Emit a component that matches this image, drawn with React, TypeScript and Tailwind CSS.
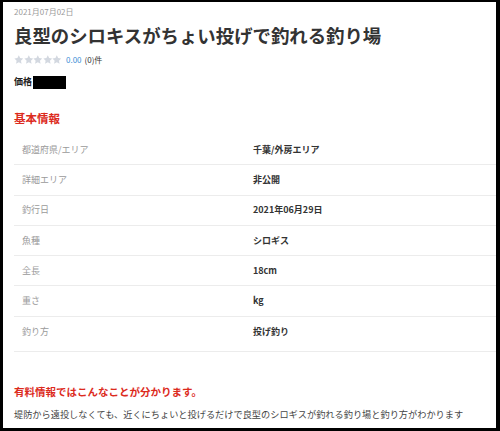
const rows = [
  { label: "都道府県/エリア", value: "千葉/外房エリア" },
  { label: "詳細エリア", value: "非公開" },
  { label: "釣行日", value: "2021年06月29日" },
  { label: "魚種", value: "シロギス" },
  { label: "全長", value: "18cm" },
  { label: "重さ", value: "kg" },
  { label: "釣り方", value: "投げ釣り" },
];

function Star() {
  return (
    <svg viewBox="0 0 24 24" className="w-[9.6px] h-[9.6px]" fill="#d3d8e0">
      <path d="M12 0.8l3.4 7 7.6 1-5.6 5.3 1.5 7.6L12 18l-6.9 3.7 1.5-7.6L1 8.8l7.6-1z" />
    </svg>
  );
}

export default function App() {
  return (
    <div
      className="w-[500px] h-[431px] bg-white border-black border-t-2 border-l-[3px] border-r-4 border-b-[3px] overflow-hidden text-[#333]"
      style={{ fontFamily: '"Noto Sans CJK JP", "Noto Sans", sans-serif' }}
    >
      <div className="pl-[11px]">
        <div className="h-[20px] leading-[20px] text-[8px] text-[#9a9a9a]">2021月07月02日</div>
        <h1 className="h-[26px] leading-[26px] text-[18.4px] font-bold text-[#333]">
          良型のシロキスがちょい投げで釣れる釣り場
        </h1>
        <div className="h-[24px] flex items-center">
          <div className="flex">
            <Star />
            <Star />
            <Star />
            <Star />
            <Star />
          </div>
          <span className="ml-[4px] text-[8px] text-[#3d8fd6]">0.00</span>
          <span className="ml-[3px] text-[8px] text-[#333]">(0)件</span>
        </div>
        <div className="h-[20px] flex items-center">
          <span className="text-[9px] font-bold text-[#222]">価格</span>
          <span className="ml-[1px] w-[33px] h-[13px] bg-black" />
        </div>
        <h2 className="mt-[14px] h-[24px] leading-[24px] text-[11.5px] font-bold text-[#dc2b1d]">基本情報</h2>
        <div className="mt-[5px]">
          {rows.map((r, i) => (
            <div
              key={r.label}
              className={`grid grid-cols-[239px_1fr] items-center border-b border-[#ececec] ${
                i === rows.length - 1 ? "h-[35px] pb-[4px]" : "h-[30.3px]"
              }`}
            >
              <div className="pl-[8px] text-[9px] text-[#9a9a9a]">{r.label}</div>
              <div className="text-[9px] font-bold text-[#333]">{r.value}</div>
            </div>
          ))}
        </div>
        <h2 className="mt-[28px] h-[24px] leading-[24px] text-[10.5px] font-bold text-[#dc2b1d]">
          有料情報ではこんなことが分かります。
        </h2>
        <p className="h-[20px] leading-[20px] text-[9.2px] text-[#444]">
          堤防から遠投しなくても、近くにちょいと投げるだけで良型のシロギスが釣れる釣り場と釣り方がわかります
        </p>
      </div>
    </div>
  );
}
